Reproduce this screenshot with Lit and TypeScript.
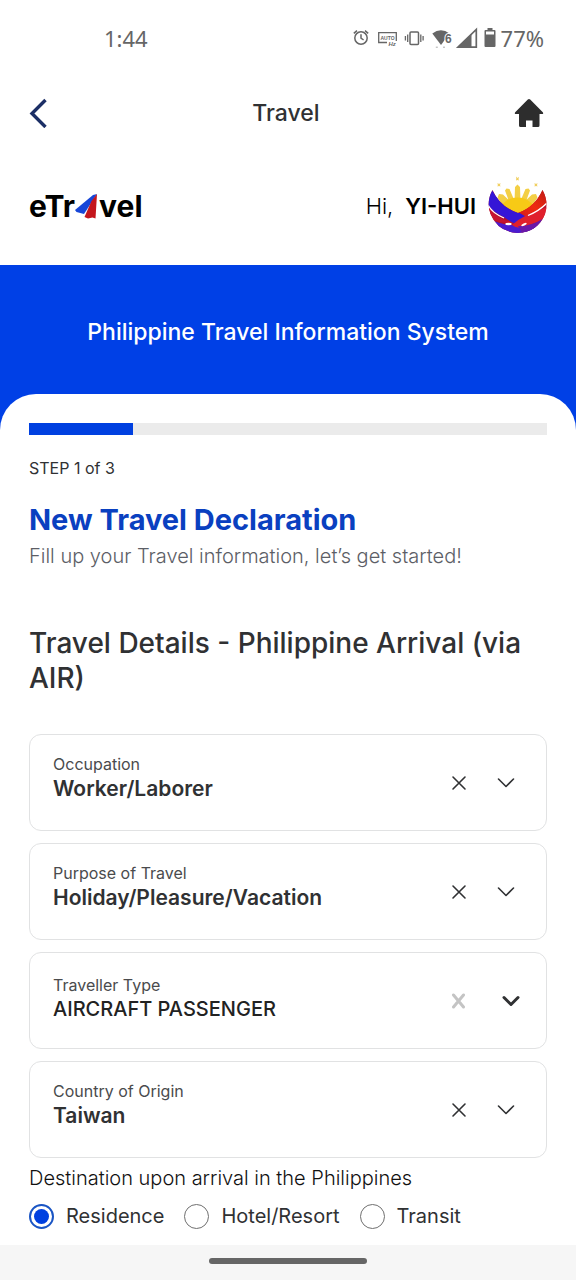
import { LitElement, html, css, svg } from "lit";
import { customElement, property, state } from "lit/decorators.js";
import { classMap } from "lit/directives/class-map.js";

interface Field {
  id: string;
  label: string;
  value: string;
  locked?: boolean;
}

const FIELDS: Field[] = [
  { id: "occupation", label: "Occupation", value: "Worker/Laborer" },
  { id: "purpose", label: "Purpose of Travel", value: "Holiday/Pleasure/Vacation" },
  { id: "traveller", label: "Traveller Type", value: "AIRCRAFT PASSENGER", locked: true },
  { id: "country", label: "Country of Origin", value: "Taiwan" },
];

const DESTINATIONS = ["Residence", "Hotel/Resort", "Transit"];

@customElement("status-bar")
class StatusBar extends LitElement {
  static styles = css`
    :host {
      display: flex;
      align-items: center;
      justify-content: space-between;
      height: 76px;
      padding: 0 32px 0 104px;
      color: #666;
      font-family: "Noto Sans", sans-serif;
      font-size: 22px;
      line-height: 28px;
    }
    .icons {
      display: flex;
      align-items: center;
      gap: 5px;
    }
    svg {
      display: block;
    }
    .hint {
      font: 700 5px "Liberation Sans", sans-serif;
    }
    .slanted {
      font: italic 700 6px "Liberation Sans", sans-serif;
    }
    .six {
      font: 700 12px "Liberation Sans", sans-serif;
    }
  `;

  render() {
    return html`
      <span>1:44</span>
      <div class="icons">
        <svg width="126" height="24" viewBox="0 0 126 24" fill="none" stroke="#666" stroke-width="1.5" aria-hidden="true">
          <circle cx="8" cy="12" r="6.2" />
          <path d="M8 8.3V12.2L10.6 14M.8 7.4L4 4.6M15.2 7.4L12 4.6" />
          <path d="M34 16.5H25.700V6.700H43.300V15" stroke-width="1.3" />
          <text class="hint" x="27.500" y="13.500" fill="#666" stroke="none">AUTO</text>
          <text class="slanted" x="35.500" y="20" fill="#666" stroke="none">Hz</text>
          <rect x="57" y="6" width="8.500" height="12.500" rx="1" />
          <path d="M54.700 8.500V16M52.400 10V14.400M67.800 8.500V16M70.100 10V14.400" stroke-width="1.3" />
          <path d="M79.300 7.500Q88 1 96.500 7.500L88 19Z" fill="#666" stroke="none" />
          <path d="M82.800 21.200H84.800M90 21.200H92" stroke-width="1" stroke="#aaa" />
          <text class="six" x="92" y="17" fill="#666" stroke="#fff" stroke-width="2" paint-order="stroke">6</text>
          <path d="M105 21.200L123.300 3.500V21.200Z" stroke-width="1.7" />
          <path d="M104.500 21.500L118.500 8V21.500Z" fill="#666" stroke="none" />
        </svg>
        <svg width="12" height="20" viewBox="0 0 12 20" fill="#666" aria-hidden="true">
          <path fill-rule="evenodd" d="M3.5 0H8.5V2H10.5Q11.5 2 11.5 3V18Q11.5 19 10.5 19H1.5Q.5 19 .5 18V3Q.5 2 1.5 2H3.5ZM2 3.5V6.5H10V3.5Z" />
        </svg>
        <span>77%</span>
      </div>
    `;
  }
}

@customElement("select-card")
class SelectCard extends LitElement {
  @property({ attribute: false }) field!: Field;
  @state() private value: string | null = null;

  static styles = css`
    :host {
      display: block;
    }
    .card {
      box-sizing: border-box;
      display: flex;
      align-items: center;
      min-height: 97px;
      padding: 0 31px 0 23px;
      border: 1px solid #e1e2e3;
      border-radius: 12px;
      color: #303133;
    }
    .text {
      flex: 1;
      min-width: 0;
      padding-bottom: 13px;
    }
    .locked .text {
      padding-bottom: 6px;
    }
    label {
      display: block;
      font-size: 16px;
      line-height: 24px;
      color: #4a4b4d;
    }
    select {
      display: block;
      width: 100%;
      padding: 0;
      border: 0;
      appearance: none;
      background: none;
      font: 600 21px/25px Inter, sans-serif;
      color: inherit;
      opacity: 1;
    }
    .locked select {
      font-size: 20px;
      font-weight: 500;
      color: #222;
    }
    button {
      display: grid;
      place-items: center;
      width: 24px;
      height: 24px;
      margin-right: 26px;
      padding: 0;
      border: 0;
      background: none;
      color: inherit;
    }
    .locked button {
      margin-right: 31px;
      color: #c4c4c4;
    }
    .locked {
      padding-right: 26px;
    }
    svg {
      display: block;
      fill: none;
      stroke: currentColor;
      stroke-width: 1.6;
      stroke-linecap: round;
      stroke-linejoin: round;
    }
    .locked svg {
      stroke-width: 3;
    }
  `;

  render() {
    const { id, label, value, locked } = this.field;
    const current = this.value ?? value;
    return html`
      <div class=${classMap({ card: true, locked: !!locked })}>
        <div class="text">
          <label for=${id}>${label}</label>
          <select id=${id} ?disabled=${locked}>
            <option selected>${current}</option>
          </select>
        </div>
        <button type="button" aria-label="Clear ${label}" ?disabled=${locked} @click=${() => (this.value = "")}>
          <svg width="16" height="16" viewBox="0 0 16 16">
            ${locked ? svg`<path d="M2.500 2L12.500 14M12.500 2L2.500 14" />` : svg`<path d="M2 2L14 14M14 2L2 14" />`}
          </svg>
        </button>
        <svg width="18" height="12" viewBox="0 0 18 12" aria-hidden="true">
          ${locked ? svg`<path d="M2 2.5L9 9.5 16 2.5" />` : svg`<path d="M1.5 2L9 9.5 16.5 2" />`}
        </svg>
      </div>
    `;
  }
}

@customElement("app-root")
class AppRoot extends LitElement {
  @state() private destination = "Residence";

  static styles = css`
    :host {
      display: flex;
      flex-direction: column;
      min-height: 100vh;
      background: #fff;
      color: #303133;
      font-family: Inter, sans-serif;
    }
    svg {
      display: block;
    }
    .appbar {
      display: grid;
      grid-template-columns: 32px 1fr 32px;
      align-items: center;
      height: 74px;
      padding: 0 32px 0 28px;
    }
    .appbar button {
      padding: 0;
      border: 0;
      background: none;
    }
    .appbar a {
      justify-self: end;
    }
    .title {
      margin: 0;
      text-align: center;
      font-size: 23px;
      font-weight: 500;
      line-height: 30px;
    }
    .brand {
      display: flex;
      align-items: center;
      justify-content: space-between;
      height: 111px;
      padding: 0 28px 4px 29px;
      color: #000;
    }
    .logo {
      display: flex;
      align-items: center;
      font-size: 30px;
      font-weight: 700;
      line-height: 36px;
    }
    .user {
      display: flex;
      align-items: center;
      gap: 12px;
      font-size: 22px;
      font-weight: 300;
      line-height: 28px;
    }
    .user b {
      font-weight: 600;
    }
    .banner {
      padding: 53px 16px 47px;
      margin-bottom: -36px;
      border-bottom: 36px solid #0040e6;
      background: #0040e6;
      color: #fff;
      text-align: center;
      font-size: 23px;
      font-weight: 500;
      line-height: 29px;
    }
    .sheet {
      flex: 1;
      padding: 29px 29px 14px;
      border-radius: 36px 36px 0 0;
      background: #fff;
    }
    .track {
      height: 12px;
      background: #ebebeb;
    }
    .fill {
      height: 100%;
      background: #0040e0;
    }
    .step {
      margin: 21px 0 0;
      font-size: 16px;
      line-height: 24px;
    }
    h1 {
      margin: 20px 0 0;
      color: #0a40c0;
      font-size: 29px;
      font-weight: 700;
      line-height: 40px;
    }
    .lead {
      margin: 2px 0 0;
      color: #5c5e66;
      font-size: 20px;
      font-weight: 300;
      line-height: 28px;
    }
    h2 {
      margin: 56px 0 0;
      font-size: 28px;
      font-weight: 500;
      line-height: 35px;
    }
    .fields {
      display: grid;
      gap: 12px;
      margin-top: 38px;
    }
    fieldset {
      margin: 7px 0 0;
      padding: 0;
      border: 0;
      font-size: 20px;
      line-height: 26px;
    }
    legend {
      padding: 0;
      font-weight: 300;
      color: #111;
    }
    .options {
      display: flex;
      flex-wrap: wrap;
      gap: 8px 20px;
      margin-top: 12px;
    }
    .option {
      display: flex;
      align-items: center;
      gap: 12px;
    }
    .option input {
      display: grid;
      place-items: center;
      appearance: none;
      width: 25px;
      height: 25px;
      margin: 0;
      border: 1px solid #6f6f6f;
      border-radius: 50%;
    }
    .option input:checked {
      border: 2px solid #1a55c4;
    }
    .option input:checked::before {
      content: "";
      width: 15px;
      height: 15px;
      border-radius: 50%;
      background: #0040e0;
    }
    .gesture {
      display: grid;
      justify-content: center;
      padding: 13px 0 16px;
      background: #f6f6f6;
    }
    .handle {
      width: 158px;
      height: 6px;
      border-radius: 3px;
      background: #666;
    }
  `;

  private seal() {
    return html`
      <svg width="60" height="60" viewBox="0 0 60 60" aria-hidden="true">
        <defs>
          <clipPath id="disc"><path d="M4.500 14Q-2 26 2.500 38Q10 56 29.500 57Q50 56 57 38Q61 26 54.500 14Q47 31 30 37Q12 31 4.500 14Z" /></clipPath>
          <linearGradient id="red" x1="0" y1="1" x2="1" y2="0">
            <stop offset="0" stop-color="#c01020" />
            <stop offset=".55" stop-color="#f02a10" />
            <stop offset="1" stop-color="#b01818" />
          </linearGradient>
        </defs>
        <path fill="#f3cf45" d="M26.500 26L27 11 29.500 8.500 32 11 32.500 26ZM22 28L17 14.500 18.500 12.500 21.500 13 27 26ZM32 26L37.500 13 40.500 12.500 42 14.500 37 28ZM17 33L9.500 21.500 11 18 15 18.500 25 28ZM34 28L44 18.500 48 18 49.500 21.500 42 33Z" />
        <path fill="#f7ca16" d="M13 31Q18 21.500 29.500 21.500Q41 21.500 46 31L30 42Z" />
        <path fill="#f0cf60" d="M28 .5L29.500 2 31 .8 30.500 3 31 4.500 29.500 4 28 4.500 28.300 2.500ZM9.500 7L11 8 12.500 7 12 9 12.500 10.500 11 10 9.500 10.500 9.800 9ZM46.500 7L48 8 49.500 7 49 9 49.500 10.500 48 10 46.500 10.500 46.800 9Z" />
        <g clip-path="url(#disc)">
          <path fill="#b3122c" d="M0 10H60V60H0Z" />
          <path fill="url(#red)" d="M60 6V27Q50 35 38 42Q28 48 16 49L24 39Q42 34 55 12Z" />
          <path fill="#3516d6" d="M2 10Q10 28 30 36Q38 41 46 45L36 50Q26 49 16 41Q6 37 0 29Z" />
          <path fill="#c61430" d="M0 31Q10 43 22 46Q12 48 4 43Z" />
          <path fill="#4a1cd0" d="M0 42Q10 48 24 49Q36 53 50 49L40 60H10Z" />
          <path fill="#e0202c" d="M24 49Q36 38 60 31V41Q50 47 38 50Q30 54 24 49Z" />
          <path fill="#6a18a8" d="M30 50Q42 51 56 42L48 54 34 57Z" />
          <path fill="none" stroke="#fff" stroke-width="1.300" d="M0 29Q4 37 16 42M59 27Q51 35 40 39.500" />
        </g>
        <ellipse cx="20.500" cy="48" rx="3.200" ry="1.200" fill="#fff" />
        <ellipse cx="36" cy="48.500" rx="3" ry="1" fill="#fff" transform="rotate(-25 36 48.500)" />
      </svg>
    `;
  }

  render() {
    return html`
      <status-bar></status-bar>
      <header class="appbar">
        <button type="button" aria-label="Back">
          <svg width="20" height="30" viewBox="0 0 20 30" fill="none" stroke="#1c2f66" stroke-width="3.400">
            <path d="M17.500 2L4 15.500 17.500 29" />
          </svg>
        </button>
        <p class="title">Travel</p>
        <a href="#home" aria-label="Home">
          <svg width="30" height="32" viewBox="0 0 30 32" fill="#2d2d2d">
            <path d="M13.800 2.500Q15 1.500 16.200 2.500L28.800 15.200Q30 17 28 17H25.500V28.500Q25.500 30 24 30H18.500V23.500H12V30H6.500Q5 30 5 28.500V17H2Q0 17 1.200 15.200Z" />
          </svg>
        </a>
      </header>
      <div class="brand">
        <div class="logo">
          <span>eTr</span>
          <svg width="24" height="28" viewBox="0 0 24 28" aria-hidden="true">
            <path fill="#1746d8" d="M22 2L18 3 0 18 1.500 20 9 22Z" />
            <path fill="#c4161c" d="M22 2L16.500 9 9.500 25 13 26.500 17.500 25.500 20.500 26.500Z" />
          </svg>
          <span>vel</span>
        </div>
        <div class="user">
          <span>Hi,</span>
          <b>YI-HUI</b>
          ${this.seal()}
        </div>
      </div>
      <div class="banner">Philippine Travel Information System</div>
      <main class="sheet">
        <div class="track" role="progressbar" aria-valuenow="20" aria-label="Progress">
          <div class="fill" style="width:20%"></div>
        </div>
        <p class="step">STEP 1 of 3</p>
        <h1>New Travel Declaration</h1>
        <p class="lead">Fill up your Travel information, let’s get started!</p>
        <h2>Travel Details - Philippine Arrival (via AIR)</h2>
        <div class="fields">
          ${FIELDS.map((field) => html`<select-card .field=${field}></select-card>`)}
        </div>
        <fieldset>
          <legend>Destination upon arrival in the Philippines</legend>
          <div class="options">
            ${DESTINATIONS.map(
              (name) => html`
                <label class="option">
                  <input
                    type="radio"
                    name="destination"
                    .checked=${this.destination === name}
                    @change=${() => (this.destination = name)}
                  />
                  <span>${name}</span>
                </label>
              `,
            )}
          </div>
        </fieldset>
      </main>
      <div class="gesture"><div class="handle"></div></div>
    `;
  }
}
